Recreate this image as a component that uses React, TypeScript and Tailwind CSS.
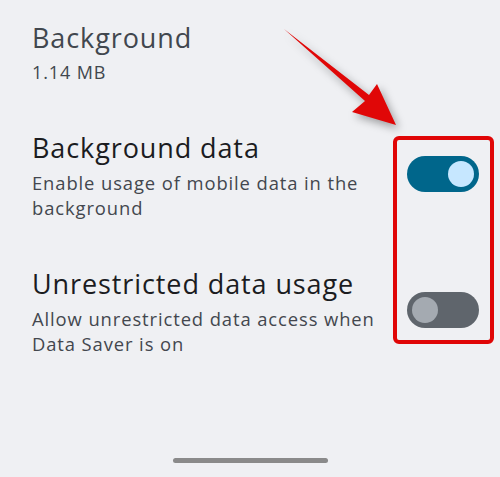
import React from 'react';

type SettingRow = {
  title: string;
  summary: string[];
  on: boolean;
};

const rows: SettingRow[] = [
  { title: 'Background data', summary: ['Enable usage of mobile data in the', 'background'], on: true },
  { title: 'Unrestricted data usage', summary: ['Allow unrestricted data access when', 'Data Saver is on'], on: false },
];

function Toggle({ on }: { on: boolean }) {
  return (
    <div
      className={
        on
          ? 'flex h-[36px] w-[72px] shrink-0 items-center justify-end rounded-full bg-[#00668b] pr-[5px]'
          : 'flex h-[36px] w-[72px] shrink-0 items-center justify-start rounded-full bg-[#5f656c] pl-[5px]'
      }
    >
      <span className={on ? 'h-[26px] w-[26px] rounded-full bg-[#c6e7ff]' : 'h-[26px] w-[26px] rounded-full bg-[#a4aab1]'} />
    </div>
  );
}

export default function App() {
  return (
    <div className="relative flex h-[477px] w-[500px] flex-col overflow-hidden bg-[#eff0f3] font-['Open_Sans',sans-serif] tracking-[0.9px]">
      <header className="pl-[32px] pt-[20px]">
        <h1 className="text-[27px] leading-[36px] text-[#41474e]">Background</h1>
        <p className="mt-[4px] text-[18px] leading-[24px] text-[#41474e]">1.14 MB</p>
      </header>

      <div className="mt-[46px] flex flex-col gap-[46px] pl-[32px] pr-[21px]">
        {rows.map(row => (
          <div key={row.title} className="flex items-center justify-between">
            <div>
              <h2 className="text-[27px] leading-[36px] text-[#1b1c1f]">{row.title}</h2>
              <p className="mt-[4px] text-[18.4px] leading-[25px] text-[#43474e]">
                {row.summary[0]}
                <br />
                {row.summary[1]}
              </p>
            </div>
            <div className="pb-[3px]">
              <Toggle on={row.on} />
            </div>
          </div>
        ))}
      </div>

      <div className="mt-auto flex justify-center pb-[14px]">
        <div className="h-[5px] w-[155px] rounded-full bg-[#8a8a8a]" />
      </div>

      {/* annotation overlay */}
      <div className="absolute left-[393px] top-[136px] h-[208px] w-[101px] rounded-[6px] border-[4px] border-[#e00606]" />
      <svg
        className="absolute left-0 top-0 drop-shadow-[3px_4px_4px_rgba(0,0,0,0.35)]"
        width="500"
        height="477"
        viewBox="0 0 500 477"
      >
        <polygon points="284,29 369,95 377,84 396,125 352,112 365,101" fill="#e00707" />
      </svg>
    </div>
  );
}
